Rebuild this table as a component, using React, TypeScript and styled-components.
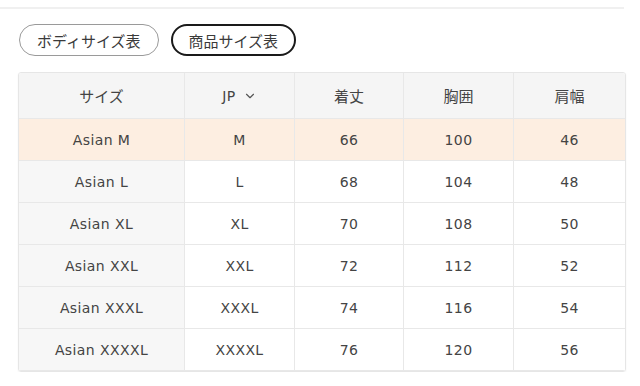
import React from "react";
import styled, { createGlobalStyle } from "styled-components";
import { ChevronDown } from "lucide-react";

const GlobalStyle = createGlobalStyle`
  body {
    margin: 0;
    background: #fff;
    font-family: "DejaVu Sans", "Noto Sans CJK JP", sans-serif;
    color: #444;
  }
`;

const Page = styled.div`
  width: 624px;
  padding-top: 7px;
`;

const Divider = styled.div`
  height: 2px;
  background: #f0f0f0;
`;

const Tabs = styled.div`
  display: flex;
  gap: 12px;
  padding: 15px 0 0 19px;
`;

const Tab = styled.button<{ $active?: boolean }>`
  height: 32px;
  padding: 0 ${(p) => (p.$active ? "16px" : "17px")};
  border-radius: 16px;
  border: ${(p) => (p.$active ? "2px solid #1a1a1a" : "1px solid #9a9a9a")};
  background: #fff;
  font-family: "Noto Sans CJK JP", sans-serif;
  font-size: 15px;
  color: #3a3a3a;
  display: flex;
  align-items: center;
`;

const Table = styled.div`
  margin: 16px 0 0 18px;
  width: 606px;
  border: 1px solid #e6e6e6;
  border-radius: 3px;
  overflow: hidden;
  box-shadow: 0 1px 2px rgba(0, 0, 0, 0.06);
  display: grid;
  grid-template-columns: 166px 110px 109px 110px 1fr;
`;

const Cell = styled.div<{ $bg: string; $h: number }>`
  height: ${(p) => p.$h}px;
  background: ${(p) => p.$bg};
  border-right: 1px solid #e8e8e8;
  border-bottom: 1px solid #e8e8e8;
  box-sizing: border-box;
  display: flex;
  align-items: center;
  justify-content: center;
  gap: 7px;
  font-size: 14px;
  letter-spacing: 0.4px;
  color: #444;
  &:nth-child(5n) {
    border-right: none;
  }
`;

const Jp = styled.span`
  font-family: "Noto Sans CJK JP", sans-serif;
  font-size: 15px;
  letter-spacing: 0;
`;

const headers = ["サイズ", "JP", "着丈", "胸囲", "肩幅"];
const rows = [
  ["Asian M", "M", "66", "100", "46"],
  ["Asian L", "L", "68", "104", "48"],
  ["Asian XL", "XL", "70", "108", "50"],
  ["Asian XXL", "XXL", "72", "112", "52"],
  ["Asian XXXL", "XXXL", "74", "116", "54"],
  ["Asian XXXXL", "XXXXL", "76", "120", "56"],
];

export default function App() {
  return (
    <>
      <GlobalStyle />
      <Page>
        <Divider />
        <Tabs>
          <Tab>ボディサイズ表</Tab>
          <Tab $active>商品サイズ表</Tab>
        </Tabs>
        <Table>
          {headers.map((h) => (
            <Cell key={h} $bg="#f5f5f5" $h={46}>
              {h === "JP" ? (
                <>
                  <span>JP</span>
                  <ChevronDown size={14} strokeWidth={2} color="#555" />
                </>
              ) : (
                <Jp>{h}</Jp>
              )}
            </Cell>
          ))}
          {rows.map((r, i) =>
            r.map((v, j) => (
              <Cell
                key={`${i}-${j}`}
                $h={42}
                $bg={i === 0 ? "#fdeee1" : j === 0 ? "#f7f7f7" : "#fff"}
              >
                {v}
              </Cell>
            ))
          )}
        </Table>
      </Page>
    </>
  );
}
